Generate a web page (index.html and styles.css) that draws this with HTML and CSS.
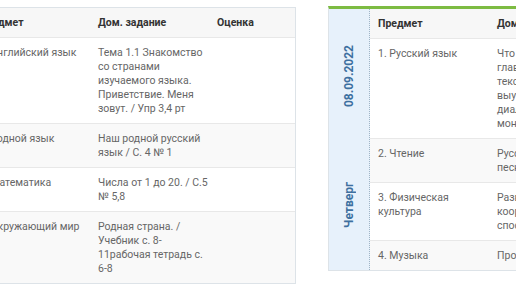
FILE: index.html
```html
<!DOCTYPE html>
<html lang="ru">
<head>
<meta charset="utf-8">
<link rel="stylesheet" href="styles.css">
</head>
<body>
<div class="page">
  <div class="panel panel-left">
    <table class="grid grid-left">
      <colgroup><col class="c1"><col class="c2"><col class="c3"></colgroup>
      <thead>
        <tr><th>Предмет</th><th>Дом. задание</th><th>Оценка</th></tr>
      </thead>
      <tbody>
        <tr><td>1. Английский язык</td><td class="hw">Тема 1.1 Знакомство<br>со странами<br>изучаемого языка.<br>Приветствие. Меня<br>зовут. / Упр 3,4 рт</td><td></td></tr>
        <tr class="alt"><td>2. Родной язык</td><td class="hw">Наш родной русский<br>язык / С. 4 № 1</td><td></td></tr>
        <tr><td>3. Математика</td><td class="hw">Числа от 1 до 20. / С.5<br>№ 5,8</td><td></td></tr>
        <tr class="alt"><td>4. Окружающий мир</td><td class="hw">Родная страна. /<br>Учебник с. 8-<br>11рабочая тетрадь с.<br>6-8</td><td></td></tr>
      </tbody>
    </table>
  </div>
  <div class="panel panel-right">
    <div class="day">
      <span class="vlabel date">08.09.2022</span>
      <span class="vlabel dayname">Четверг</span>
    </div>
    <table class="grid grid-right">
      <colgroup><col class="c1"><col class="c2"></colgroup>
      <thead>
        <tr><th>Предмет</th><th>Дом. задание</th></tr>
      </thead>
      <tbody>
        <tr><td>1. Русский язык</td><td class="hw">Что такое текст? Тема и<br>главная мысль текста.<br>текст-рассуждение. Правило<br>выучить наизусть. Диалог и<br>диалогическая речь,<br>монологическая речь.</td></tr>
        <tr class="alt"><td>2. Чтение</td><td class="hw">Русские народные<br>песни. Выучить одну.</td></tr>
        <tr><td>3. Физическая культура</td><td class="hw">Развитие<br>координационных<br>способностей.</td></tr>
        <tr class="alt"><td>4. Музыка</td><td class="hw">Прогулка в мир музыки.</td></tr>
      </tbody>
    </table>
  </div>
</div>
</body>
</html>
```

FILE: styles.css
```css
html, body {
  margin: 0;
  padding: 0;
  background: #ffffff;
  overflow: hidden;
}
body {
  font-family: Roboto, "Liberation Sans", sans-serif;
  font-size: 10.5px;
  line-height: 14px;
  color: #666666;
}
.page {
  display: flex;
  align-items: flex-start;
  gap: 32px;
  padding-top: 6px;
  width: 800px;
}
.panel {
  background: #ffffff;
  border: 1px solid #dde3e8;
  flex: none;
}
.panel-left {
  margin-left: -30px;
  margin-top: 1px;
}
.panel-right {
  display: flex;
  border-top: 3px solid #7dbb42;
}
.grid {
  border-collapse: collapse;
  table-layout: fixed;
}
.grid-left { width: 324px; }
.grid-left .c1 { width: 119px; }
.grid-left .c2 { width: 119px; }
.grid-left .c3 { width: 86px; }
.grid-right { width: 380px; }
.grid-right .c1 { width: 119px; }
.grid-right .c2 { width: 261px; }
.grid th, .grid td {
  padding: 8px 2px 7px 8px;
  text-align: left;
  vertical-align: top;
  border-bottom: 1px solid #e8e8e8;
}
.grid td.hw { white-space: nowrap; }
.grid tbody tr:last-child td { border-bottom: none; }
.grid th {
  background: #f7f7f7;
  color: #333333;
  font-weight: 700;
}
.grid tr.alt td { background: #f9f9f9; }
.day {
  width: 40px;
  flex: none;
  background: #e7f1fb;
  border-right: 1px dotted #9fb4c6;
  display: flex;
  flex-direction: column;
  align-items: center;
  padding-top: 36px;
  gap: 75px;
}
.vlabel {
  writing-mode: vertical-rl;
  transform: rotate(180deg);
  color: #3e70a0;
  font-size: 12px;
  font-weight: 700;
  line-height: 14px;
}
```
